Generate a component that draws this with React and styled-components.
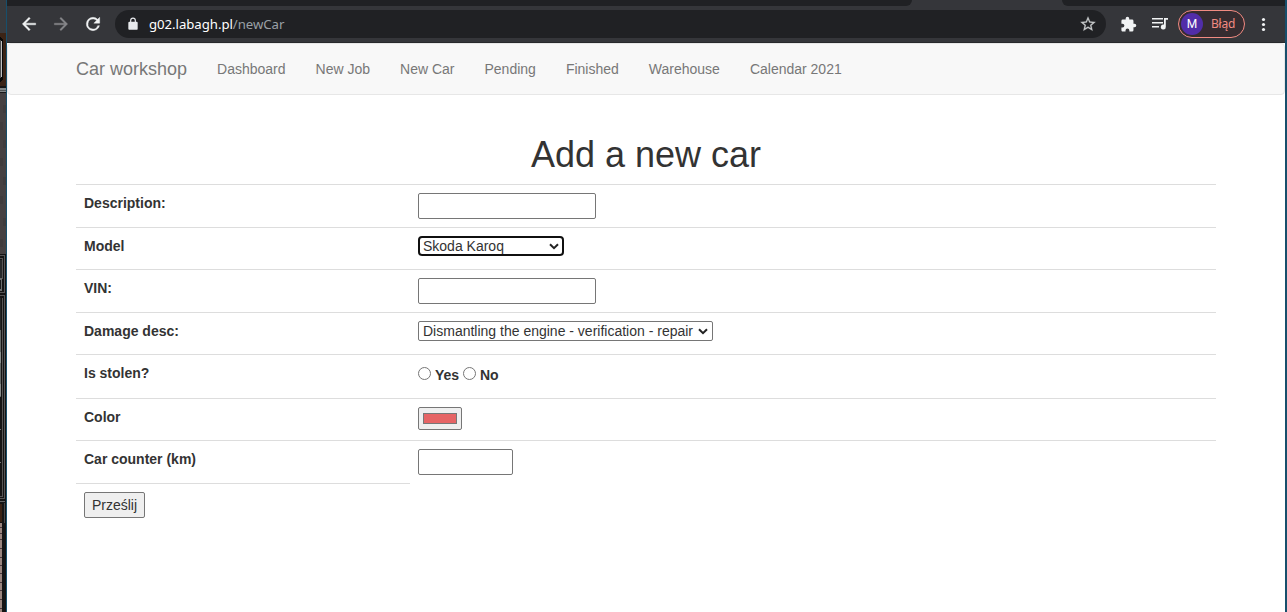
import React from "react";
import styled, { createGlobalStyle } from "styled-components";

const Global = createGlobalStyle`
  *, *::before, *::after { box-sizing: border-box; }
  html, body { margin: 0; padding: 0; overflow: hidden; background: #fff; }
  body {
    font-family: "Liberation Sans", Arial, sans-serif;
    font-size: 14px;
    line-height: 20px;
    color: #333;
  }
`;

const Desktop = styled.div`
  display: flex;
  width: 1287px;
  height: 612px;
  background: #174f6c;
`;

const Wallpaper = styled.svg`
  flex: 0 0 6px;
  margin-right: 1px;
  display: block;
`;

const Browser = styled.div`
  flex: 0 0 1278px;
  background: #fff;
  overflow: hidden;
`;

const TabStrip = styled.div`
  height: 6px;
  display: flex;
  justify-content: space-between;
  background: #35363a;
`;

const TabGap = styled.div`
  width: ${(p) => p.$width}px;
  background: #202124;
  border-radius: ${(p) => (p.$side === "left" ? "0 0 8px 0" : "0 0 0 8px")};
`;

const Toolbar = styled.div`
  height: 37px;
  display: flex;
  align-items: center;
  background: #35363a;
  border-bottom: 1px solid #28292c;
`;

const Icon = styled.svg`
  display: block;
  flex: none;
  width: ${(p) => p.$size || 20}px;
  height: ${(p) => p.$size || 20}px;
  margin-left: ${(p) => p.$gap || 0}px;
  fill: ${(p) => p.$color || "#f1f3f4"};
`;

const Address = styled.div`
  display: flex;
  align-items: center;
  width: 991px;
  height: 28px;
  margin-left: 12px;
  padding: 0 9px 0 11px;
  border-radius: 14px;
  background: #202124;
`;

const Url = styled.div`
  flex: 1;
  margin-left: 9px;
  font-family: "Noto Sans", "Open Sans", sans-serif;
  font-size: 13.2px;
  letter-spacing: -0.04px;
  line-height: 20px;
  color: #fff;
  span { color: #9aa0a6; }
`;

const Profile = styled.div`
  display: flex;
  align-items: center;
  width: 67px;
  height: 28px;
  margin-left: 10px;
  padding-left: 2px;
  border: 1px solid #f28b82;
  border-radius: 14px;
  background: #362c30;
  color: #f28b82;
  font-family: "Noto Sans", "Open Sans", sans-serif;
  font-size: 12px;
  letter-spacing: -0.2px;
`;

const Avatar = styled.div`
  width: 22px;
  height: 22px;
  margin-right: 8px;
  border-radius: 50%;
  background: #512da8;
  color: #fff;
  font-family: Roboto, sans-serif;
  font-size: 12px;
  line-height: 23px;
  text-align: center;
`;

const Navbar = styled.nav`
  display: flex;
  height: 52px;
  padding-left: 68px;
  border: 1px solid #e7e7e7;
  border-radius: 4px;
  background: #f8f8f8;
  color: #777;
`;

const Brand = styled.div`
  font-size: 18px;
  line-height: 20px;
  padding: 15px 15px 15px 0;
`;

const NavLink = styled.div`
  padding: 15px;
`;

const Page = styled.main`
  width: 1140px;
  margin: 40px 0 0 69px;
`;

const Title = styled.h1`
  margin: 0 0 9px;
  font-size: 36px;
  line-height: 40px;
  font-weight: 400;
  text-align: center;
`;

const Row = styled.div`
  display: grid;
  grid-template-columns: 334px 1fr;
  height: ${(p) => p.$height}px;
`;

const Cell = styled.div`
  padding: 8px;
  font-weight: ${(p) => (p.$bold ? 700 : 400)};
  border-top: ${(p) => (p.$plain ? "0" : "1px solid #ddd")};
`;

const TextInput = styled.input`
  display: block;
  width: ${(p) => p.$width}px;
  height: 26px;
  margin: 0;
  border: 1px solid #767676;
  border-radius: 2px;
  background: #fff;
  outline: none;
`;

const SelectBox = styled.div`
  display: inline-grid;
  vertical-align: top;
  align-items: center;
  width: ${(p) => p.$width}px;
  height: 20px;
  border: ${(p) => (p.$focused ? "2px solid #101010" : "1px solid #767676")};
  border-radius: ${(p) => (p.$focused ? 4 : 2)}px;
  select {
    grid-area: 1 / 1;
    width: 100%;
    height: 16px;
    margin: 0;
    padding: 0 0 0 ${(p) => (p.$focused ? 3 : 4)}px;
    border: 0;
    outline: none;
    appearance: none;
    background: transparent;
    color: #333;
    font: 14px/16px "Liberation Sans", Arial, sans-serif;
  }
  svg {
    grid-area: 1 / 1;
    justify-self: end;
    margin-right: ${(p) => (p.$focused ? 3 : 4)}px;
    pointer-events: none;
  }
`;

const RadioGroup = styled.div`
  display: flex;
  height: 20px;
  line-height: 24px;
  font-weight: 700;
  input { width: 13px; height: 13px; margin: 4px 4px 0 0; }
  label { display: flex; width: 45px; white-space: nowrap; }
`;

const ColorButton = styled.button`
  display: block;
  width: 44px;
  height: 23px;
  margin: 0;
  padding: 5px 4px;
  border: 1px solid #767676;
  border-radius: 2px;
  background: #efefef;
`;

const Swatch = styled.span`
  display: block;
  height: 11px;
  border: 1px solid #777;
  background: #e66465;
`;

const Submit = styled.button`
  display: block;
  width: 61px;
  height: 26px;
  padding: 0;
  border: 1px solid #767676;
  border-radius: 2px;
  background: #efefef;
  color: #333;
  font: 14px/20px "Liberation Sans", Arial, sans-serif;
`;

const links = ["Dashboard", "New Job", "New Car", "Pending", "Finished", "Warehouse", "Calendar 2021"];

function Select({ width, focused, value }) {
  return (
    <SelectBox $width={width} $focused={focused}>
      <select defaultValue={value}><option>{value}</option></select>
      <svg width="10" height="7" viewBox="0 0 10 7">
        <path d="M1 1.2 5 5.2 9 1.2" fill="none" stroke="#222" strokeWidth="2" />
      </svg>
    </SelectBox>
  );
}

function Field({ label, height, children }) {
  return (
    <Row $height={height}>
      <Cell $bold>{label}</Cell>
      <Cell>{children}</Cell>
    </Row>
  );
}

function Scenery() {
  return (
    <Wallpaper width="6" height="612" viewBox="0 0 6 612" shapeRendering="crispEdges">
      <rect width="6" height="612" fill="#151414" />
      <rect width="6" height="33" fill="#393a3d" />
      <rect y="33" width="6" height="53" fill="#3b2416" />
      <path d="M0 37H1L3 40V79L1 82H0Z" fill="#080808" />
      <rect y="40" width="1" height="38" fill="#4a4b4c" />
      <rect x="1" y="41" width="1" height="36" fill="#c1c1c1" />
      <rect y="86" width="6" height="2" fill="#171514" />
      <rect y="88" width="6" height="4" fill="#828687" />
      <rect y="90" width="6" height="1" fill="#505354" />
      <rect y="92" width="6" height="1" fill="#191919" />
      <rect y="93" width="6" height="161" fill="#454041" />
      {[105, 122, 140, 158, 177, 196, 218, 239].map((y, i) => (
        <rect key={y} x={i % 2 ? 0 : 3} y={y} width="3" height="8" fill="#3f3b3c" />
      ))}
      <path d="M0 255.5H4.5V292.5H0M0 258.5H2.5V278L1 280M0 295.5H4.5V498.5H0M2.5 298V496H0" fill="none" stroke="#565555" />
      <rect y="260" width="2" height="18" fill="#27292a" />
      <rect y="278" width="2" height="13" fill="#6b6d6d" />
      <rect y="280" width="1" height="9" fill="#191919" />
      <rect y="298" width="1" height="32" fill="#252525" />
      <rect y="330" width="1" height="67" fill="#646967" />
      <rect y="352" width="1" height="11" fill="#8b908e" />
      <rect y="384" width="1" height="12" fill="#898c8b" />
      {[429, 462].map((y) => <rect key={y} y={y} width="1" height="1" fill="#777" />)}
      <path d="M0 501.5H4.5" stroke="#666" />
      <rect y="504" width="2" height="18" fill="#3b2213" />
      <rect y="523" width="2" height="89" fill="#9a857e" />
      {[527, 533, 539, 548, 557, 565, 573, 582, 590, 599, 608].map((y) => (
        <rect key={y} y={y} width="2" height="1" fill="#4a3a3e" />
      ))}
      <rect x="4" y="503" width="1" height="20" fill="#484848" />
    </Wallpaper>
  );
}

export default function App() {
  return (
    <>
      <Global />
      <Desktop>
        <Scenery />
        <Browser>
          <TabStrip>
            <TabGap $width={905} $side="left" />
            <TabGap $width={223} $side="right" />
          </TabStrip>
          <Toolbar>
            <Icon viewBox="0 0 24 24" $gap={12}>
              <path d="M20 11H7.83l5.59-5.59L12 4l-8 8 8 8 1.41-1.41L7.83 13H20z" stroke="#f1f3f4" strokeWidth=".5" />
            </Icon>
            <Icon viewBox="0 0 24 24" $gap={12} $color="#86878a">
              <path d="m12 4-1.41 1.41L16.17 11H4v2h12.17l-5.58 5.59L12 20l8-8z" stroke="#86878a" strokeWidth=".4" />
            </Icon>
            <Icon viewBox="0 0 24 24" $gap={12}>
              <path d="M17.65 6.35A7.96 7.96 0 0 0 12 4a8 8 0 1 0 7.73 10h-2.08A6 6 0 1 1 12 6c1.66 0 3.14.69 4.22 1.78L13 11h7V4z" stroke="#f1f3f4" strokeWidth=".5" />
            </Icon>
            <Address>
              <Icon viewBox="0 0 24 24" $size={14} $color="#e8eaed">
                <path d="M18 8h-1V6A5 5 0 0 0 7 6v2H6a2 2 0 0 0-2 2v10c0 1.1.9 2 2 2h12a2 2 0 0 0 2-2V10a2 2 0 0 0-2-2M9 6a3 3 0 0 1 6 0v2H9z" />
              </Icon>
              <Url>g02.labagh.pl<span>/newCar</span></Url>
              <Icon viewBox="0 0 24 24" $size={18} $color="#c6c8ca">
                <path d="m22 9.24-7.19-.62L12 2 9.19 8.63 2 9.24l5.46 4.73L5.82 21 12 17.27 18.18 21l-1.63-7.03zM12 15.4l-3.76 2.27 1-4.28-3.32-2.88 4.38-.38L12 6.1l1.71 4.04 4.38.38-3.32 2.88 1 4.28z" stroke="#c6c8ca" strokeWidth=".3" />
              </Icon>
            </Address>
            <Icon viewBox="0 0 24 24" $size={17} $gap={14}>
              <path d="M20.5 11H19V7a2 2 0 0 0-2-2h-4V3.5a2.5 2.5 0 0 0-5 0V5H4a2 2 0 0 0-2 2v3.8h1.5a2.7 2.7 0 0 1 0 5.4H2V20c0 1.1.9 2 2 2h3.8v-1.5a2.7 2.7 0 0 1 5.4 0V22H17a2 2 0 0 0 2-2v-4h1.5a2.5 2.5 0 0 0 0-5" />
            </Icon>
            <Icon viewBox="0 0 16 16" $size={16} $gap={15}>
              <path d="M0 2h11v1.6H0zm0 4h11v1.6H0zm0 4h7v1.6H0zM12 2h4v1.7h-2.2V11a2.5 2.5 0 1 1-1.8-2.4z" />
            </Icon>
            <Profile><Avatar>M</Avatar>Błąd</Profile>
            <Icon viewBox="0 0 16 16" $size={16} $gap={11}>
              <circle cx="7.5" cy="3.5" r="1.6" /><circle cx="7.5" cy="8.5" r="1.6" /><circle cx="7.5" cy="13.5" r="1.6" />
            </Icon>
          </Toolbar>
          <Navbar>
            <Brand>Car workshop</Brand>
            {links.map((l) => <NavLink key={l}>{l}</NavLink>)}
          </Navbar>
          <Page>
            <Title>Add a new car</Title>
            <Field label="Description:" height={43}><TextInput $width={178} /></Field>
            <Field label="Model" height={42}><Select width={146} focused value="Skoda Karoq" /></Field>
            <Field label="VIN:" height={43}><TextInput $width={178} /></Field>
            <Field label="Damage desc:" height={42}>
              <Select width={295} value="Dismantling the engine - verification - repair" />
            </Field>
            <Field label="Is stolen?" height={44}>
              <RadioGroup>
                <label><input type="radio" name="stolen" />Yes</label>
                <label><input type="radio" name="stolen" />No</label>
              </RadioGroup>
            </Field>
            <Field label="Color" height={42}><ColorButton><Swatch /></ColorButton></Field>
            <Field label="Car counter (km)" height={43}><TextInput $width={95} /></Field>
            <Row $height={43}>
              <Cell><Submit>Prześlij</Submit></Cell>
              <Cell $plain />
            </Row>
          </Page>
        </Browser>
      </Desktop>
    </>
  );
}
